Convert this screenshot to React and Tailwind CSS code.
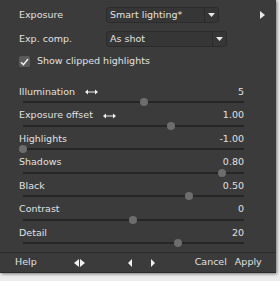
import React from "react";

const font = { fontFamily: '"DejaVu Sans", Verdana, sans-serif' };

function Arrow() {
  return (
    <svg width="13" height="6" viewBox="0 0 13 6" className="ml-[10px]">
      <path d="M2 3H11" stroke="#f0f0f0" strokeWidth="1" />
      <path d="M0 3L3 0.5V5.5Z" fill="#f0f0f0" />
      <path d="M13 3L10 0.5V5.5Z" fill="#f0f0f0" />
    </svg>
  );
}

function Dropdown({ text, width, btn }) {
  return (
    <div
      className={`flex h-[16px] items-stretch rounded-[3px] border border-[#2b2b2b] bg-[#363636] ${width}`}
    >
      <div className="flex flex-1 items-center pl-[3px] text-[9.5px] text-[#e2e2e2]">{text}</div>
      <div className={`flex items-center justify-center border-l border-[#2b2b2b] ${btn}`}>
        <svg width="7" height="4" viewBox="0 0 7 4">
          <path d="M0 0H7L3.5 4Z" fill="#e8e8e8" />
        </svg>
      </div>
    </div>
  );
}

function SliderRow({ label, value, thumb, arrow }) {
  return (
    <div className="flex h-[23.5px] flex-col">
      <div className="flex h-[12px] items-center pl-[19px] pr-[32px] text-[9.5px] text-[#e0e0e0]">
        <span>{label}</span>
        {arrow && <Arrow />}
        <span className="ml-auto">{value}</span>
      </div>
      <div className="relative ml-[23px] mt-[3px] h-[2px] w-[221px] bg-[#262626]">
        <div
          className="absolute top-[-3px] h-[8px] w-[8px] rounded-full bg-[#6d6d6d]"
          style={{ left: thumb - 23 - 4 }}
        />
      </div>
    </div>
  );
}

export default function App() {
  return (
    <div className="h-[281px] w-[280px] bg-[#ececec]" style={font}>
      <div className="flex h-[273px] w-[276px] flex-col bg-[#3b3b3b] shadow-[1px_1px_3px_rgba(0,0,0,0.5)]">
        <div className="flex h-[16px] items-center mt-[7px]">
          <div className="w-[106px] pl-[19px] text-[9.5px] text-[#e0e0e0]">Exposure</div>
          <Dropdown text="Smart lighting*" width="w-[113px]" btn="w-[14px]" />
          <svg width="5" height="8" viewBox="0 0 5 8" className="ml-[41px]">
            <path d="M0 0L5 4L0 8Z" fill="#e8e8e8" />
          </svg>
        </div>
        <div className="mt-[8px] flex h-[16px] items-center">
          <div className="w-[106px] pl-[19px] text-[9.5px] text-[#e0e0e0]">Exp. comp.</div>
          <Dropdown text="As shot" width="w-[121px]" btn="w-[14px]" />
        </div>
        <div className="mt-[9px] flex h-[11px] items-center pl-[19px]">
          <div className="flex h-[11px] w-[11px] items-center justify-center rounded-[2px] bg-[#5a5a5a]">
            <svg width="9" height="8" viewBox="0 0 9 8">
              <path d="M1 4.2L3.4 6.6L8 1" stroke="#f2f2f2" strokeWidth="1.4" fill="none" />
            </svg>
          </div>
          <span className="ml-[7px] text-[9.5px] text-[#e0e0e0]">Show clipped highlights</span>
        </div>
        <div className="mt-[19px] flex flex-col">
          <SliderRow label="Illumination" value="5" thumb={144} arrow />
          <SliderRow label="Exposure offset" value="1.00" thumb={171} arrow />
          <SliderRow label="Highlights" value="-1.00" thumb={23} />
          <SliderRow label="Shadows" value="0.80" thumb={222} />
          <SliderRow label="Black" value="0.50" thumb={189} />
          <SliderRow label="Contrast" value="0" thumb={133} />
          <SliderRow label="Detail" value="20" thumb={178} />
        </div>
        <div className="mt-auto flex h-[21px] items-center border-t border-b border-t-[#2a2a2a] border-b-[#2a2a2a] pl-[15px] text-[9.5px] text-[#e0e0e0]">
          <span>Help</span>
          <svg width="11" height="8" viewBox="0 0 11 8" className="ml-[37px]">
            <path d="M5 0L0 4L5 8Z" fill="#f0f0f0" />
            <path d="M6 0L11 4L6 8Z" fill="#f0f0f0" />
          </svg>
          <svg width="4" height="8" viewBox="0 0 4 8" className="ml-[43px]">
            <path d="M4 0L0 4L4 8Z" fill="#f0f0f0" />
          </svg>
          <svg width="4" height="8" viewBox="0 0 4 8" className="ml-[19px]">
            <path d="M0 0L4 4L0 8Z" fill="#f0f0f0" />
          </svg>
          <span className="ml-[40px]">Cancel</span>
          <span className="ml-[8px]">Apply</span>
        </div>
      </div>
    </div>
  );
}
